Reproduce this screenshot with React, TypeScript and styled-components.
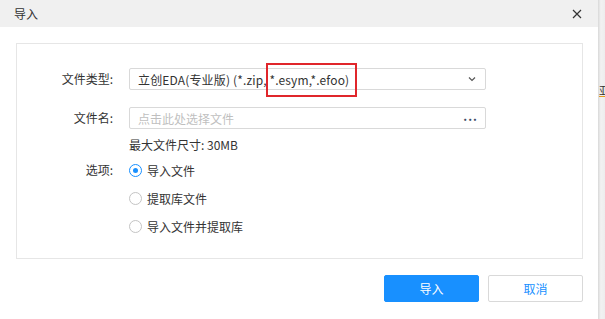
import styled, { createGlobalStyle } from "styled-components";

const GlobalStyle = createGlobalStyle`
  html, body {
    margin: 0;
    padding: 0;
    background: #ffffff;
  }
  body {
    font-family: "Noto Sans CJK SC", "Noto Sans", sans-serif;
    font-size: 12px;
    color: #333333;
  }
`;

const Window = styled.div`
  display: flex;
  width: 605px;
  height: 319px;
  overflow: hidden;
`;

const Dialog = styled.div`
  width: 598px;
  height: 319px;
  display: flex;
  flex-direction: column;
  background: #ffffff;
`;

const Edge = styled.div`
  flex: 1;
  background: linear-gradient(to right, #d8d8d8, #f2f2f2 40%, #ededed);
  position: relative;
  overflow: hidden;
`;

const EdgeGlyph = styled.span`
  position: absolute;
  left: 1px;
  top: 84px;
  font-size: 11px;
  line-height: 12px;
  color: #333;
  border-bottom: 1px solid #e69b1f;
`;

const Header = styled.div`
  height: 27px;
  background: #f0f0f0;
  display: flex;
  align-items: center;
  justify-content: space-between;
  padding: 0 15px 0 14px;
  box-sizing: border-box;
`;

const Title = styled.span`
  font-size: 12px;
  color: #333;
`;

const Close = styled.button`
  width: 12px;
  height: 12px;
  padding: 0;
  border: none;
  background: transparent;
  display: flex;
  align-items: center;
  justify-content: center;
`;

const Panel = styled.div`
  margin: 16px 15px 0 16px;
  height: 216px;
  border: 1px solid #e6e6e6;
  box-sizing: border-box;
  padding-top: 24px;
  display: grid;
  grid-template-columns: 96px 357px;
  column-gap: 16px;
  align-content: start;
`;

const Label = styled.div<{ $top?: number }>`
  text-align: right;
  line-height: 22px;
  margin-top: ${(p) => p.$top ?? 0}px;
  color: #333;
`;

const Field = styled.div<{ $top?: number }>`
  margin-top: ${(p) => p.$top ?? 0}px;
`;

const Box = styled.div<{ $padRight: number }>`
  height: 22px;
  border: 1px solid #d9d9d9;
  border-radius: 2px;
  box-sizing: border-box;
  display: flex;
  align-items: center;
  justify-content: space-between;
  padding: 0 ${(p) => p.$padRight}px 0 8px;
`;

const BoxText = styled.span<{ $placeholder?: boolean }>`
  color: ${(p) => (p.$placeholder ? "#bfbfbf" : "#333")};
  white-space: nowrap;
  letter-spacing: ${(p) => (p.$placeholder ? 0 : 0.15)}px;
`;

const Marked = styled.span`
  position: relative;
  &::after {
    content: "";
    position: absolute;
    left: -3px;
    right: -8px;
    top: -8px;
    bottom: -9px;
    border: 2px solid #e0262b;
  }
`;

const Dots = styled.span`
  color: #3d4a66;
  font-weight: bold;
  letter-spacing: 1px;
  font-size: 12px;
  line-height: 10px;
  margin-top: -4px;
`;

const Note = styled.div`
  margin-top: 7px;
  line-height: 18px;
  color: #333;
`;

const Options = styled.div`
  display: flex;
  flex-direction: column;
  gap: 10px;
  margin-top: 7px;
`;

const Option = styled.label`
  display: flex;
  align-items: center;
  gap: 5px;
  height: 18px;
  color: #333;
`;

const Radio = styled.span<{ $checked?: boolean }>`
  width: 13px;
  height: 13px;
  border-radius: 50%;
  box-sizing: border-box;
  border: 1px solid ${(p) => (p.$checked ? "#1890ff" : "#c4c4c4")};
  display: flex;
  align-items: center;
  justify-content: center;
  &::after {
    content: "";
    width: 5px;
    height: 5px;
    border-radius: 50%;
    background: ${(p) => (p.$checked ? "#1890ff" : "transparent")};
  }
`;

const Footer = styled.div`
  display: flex;
  justify-content: flex-end;
  gap: 9px;
  padding: 16px 15px 0 0;
`;

const Button = styled.button<{ $primary?: boolean }>`
  width: 95px;
  height: 27px;
  border-radius: 2px;
  font-family: "Noto Sans CJK SC", sans-serif;
  font-size: 12px;
  border: 1px solid ${(p) => (p.$primary ? "#1890ff" : "#d9d9d9")};
  background: ${(p) => (p.$primary ? "#1890ff" : "#ffffff")};
  color: ${(p) => (p.$primary ? "#ffffff" : "#1890ff")};
  padding: 0;
`;

export default function App() {
  return (
    <>
      <GlobalStyle />
      <Window>
        <Dialog>
          <Header>
            <Title>导入</Title>
            <Close aria-label="close">
              <svg width="10" height="10" viewBox="0 0 10 10">
                <path d="M1 1 L9 9 M9 1 L1 9" stroke="#333" strokeWidth="1.2" fill="none" />
              </svg>
            </Close>
          </Header>
          <Panel>
            <Label>文件类型:</Label>
            <Field>
              <Box $padRight={9}>
                <BoxText>
                  立创EDA(专业版) (*.zip, <Marked>*.esym,*.efoo)</Marked>
                </BoxText>
                <svg width="8" height="6" viewBox="0 0 8 6">
                  <path d="M1 1.5 L4 4.5 L7 1.5" stroke="#555" strokeWidth="1.2" fill="none" />
                </svg>
              </Box>
            </Field>
            <Label $top={17}>文件名:</Label>
            <Field $top={17}>
              <Box $padRight={7}>
                <BoxText $placeholder>点击此处选择文件</BoxText>
                <Dots>...</Dots>
              </Box>
            </Field>
            <div />
            <Note>最大文件尺寸: 30MB</Note>
            <Label $top={5}>选项:</Label>
            <Options>
              <Option>
                <Radio $checked />
                导入文件
              </Option>
              <Option>
                <Radio />
                提取库文件
              </Option>
              <Option>
                <Radio />
                导入文件并提取库
              </Option>
            </Options>
          </Panel>
          <Footer>
            <Button $primary>导入</Button>
            <Button>取消</Button>
          </Footer>
        </Dialog>
        <Edge>
          <EdgeGlyph>亚</EdgeGlyph>
        </Edge>
      </Window>
    </>
  );
}
